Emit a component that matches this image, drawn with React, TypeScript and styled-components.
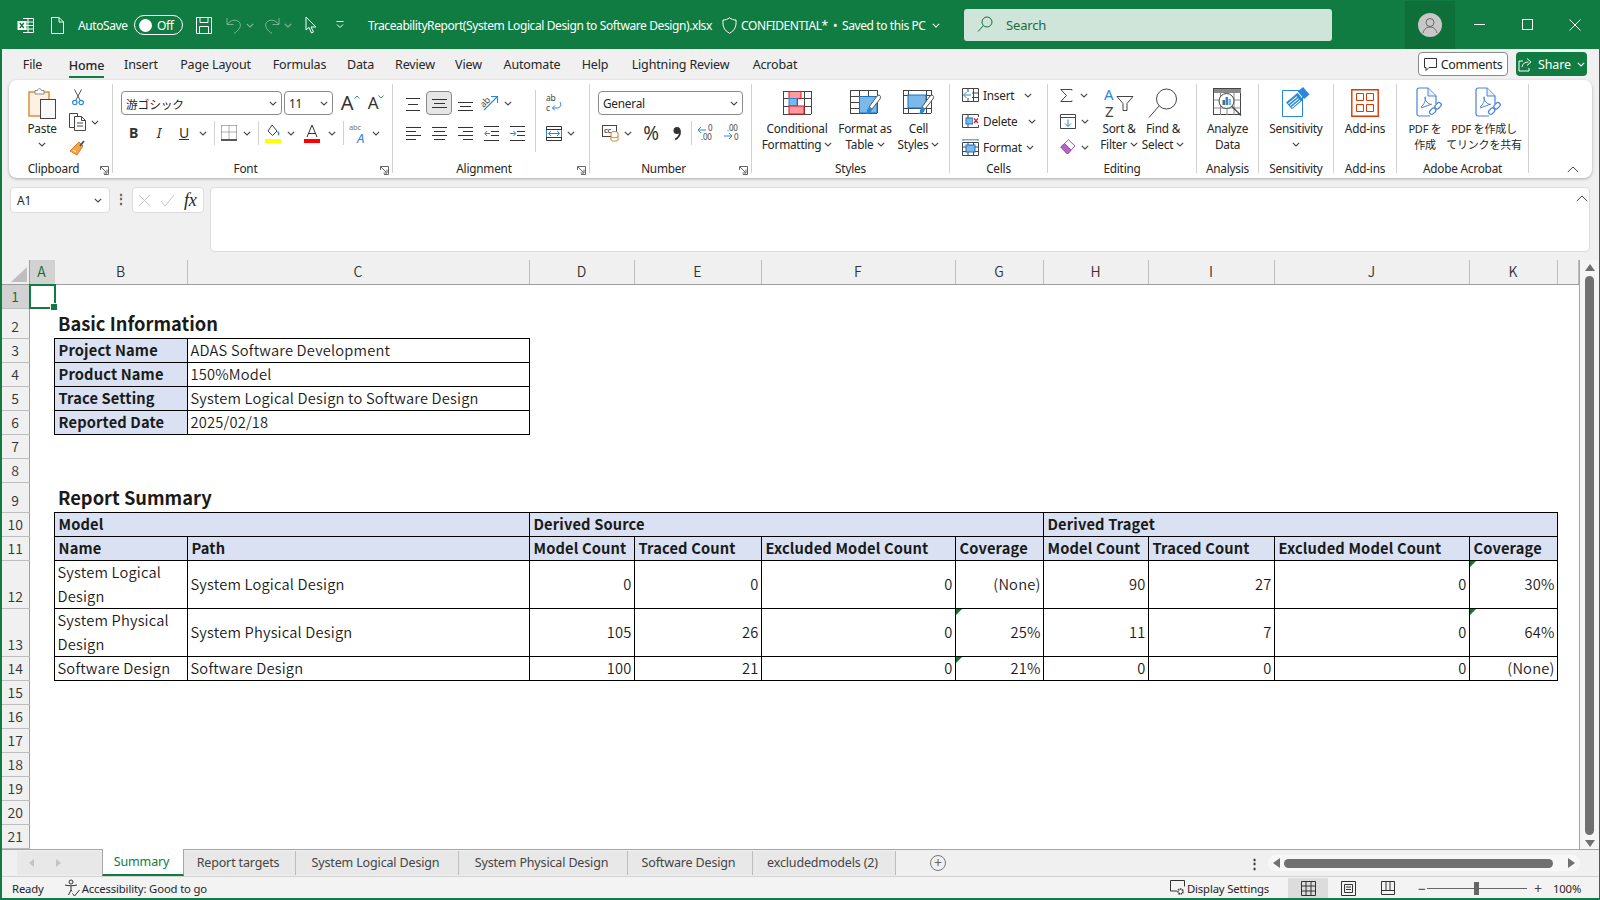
import * as React from 'react';
import styled, {createGlobalStyle} from 'styled-components';

const UI = `"Noto Sans", "Noto Sans CJK JP", sans-serif`;
const SHEET = `"Noto Sans CJK JP", "Noto Sans", sans-serif`;
const GREEN = '#107c41';

const Global = createGlobalStyle`
    html, body { margin: 0; padding: 0; background: #f0f0f0; }
    * { box-sizing: border-box; }
`;

const Window = styled.div`
    width: 1600px;
    height: 900px;
    display: flex;
    flex-direction: column;
    overflow: hidden;
    background: #f0f0f0;
    border-left: 2px solid ${GREEN};
    border-right: 1px solid ${GREEN};
    border-bottom: 2px solid ${GREEN};
    font-family: ${UI};
    font-size: 12px;
    letter-spacing: -0.15px;
    color: #262626;
`;

/* ---------- icons ---------- */

const Svg = styled.svg`
    display: block;
    flex: none;
    overflow: visible;
`;

const I: React.FC<{w: number; h: number; children: React.ReactNode}> = ({w, h, children}) => (
    <Svg width={w} height={h} viewBox={`0 0 ${w} ${h}`} fill='none'>{children}</Svg>
);

const Chev: React.FC<{color?: string}> = ({color = '#444'}) => (
    <I w={8} h={5}><path d='M.8.8 4 4l3.2-3.2' stroke={color} strokeWidth='1.1' /></I>
);

const Launcher = () => (
    <I w={9} h={9}>
        <path d='M.5 4V.5h8v8H4' stroke='#666' />
        <path d='M1 1l5.5 5.5M3.5 7h3.5V3.5' stroke='#666' />
    </I>
);

const ExcelLogo = () => (
    <I w={17} h={17}>
        <path d='M6 1.5h10.5v14H6M11 1.5v14M6 5h10.5M6 8.500h10.500M6 12h10.500' stroke='#fff' />
        <rect x='.5' y='4' width='9' height='9' fill='#fff' />
        <path d='M2.800 6l4 5M6.800 6l-4 5' stroke={GREEN} strokeWidth='1.400' />
    </I>
);

const DocIcon = () => (
    <I w={13} h={17}><path d='M.5.500h7.500l4.500 4.500v11.500H.5zM8 .5V5h4.500' stroke='#fff' /></I>
);

const SaveIcon = () => (
    <I w={16} h={17}><path d='M.5.500h15v16H.5zM4 .5v5h8v-5M3.500 16.500v-7h9v7' stroke='#fff' /></I>
);

const UndoIcon: React.FC<{flip?: boolean}> = ({flip}) => (
    <I w={16} h={17}>
        <g transform={flip ? 'matrix(-1 0 0 1 16 0)' : undefined} opacity='.42'>
            <path d='M1 1v6.500h6.500M1.500 7C5 2.500 11 2 13.500 5.500c2 3 .5 7-5.500 11' stroke='#fff' />
        </g>
    </I>
);

const PointerIcon = () => (
    <I w={12} h={18}><path d='M1 1v13l3-2.500 2.500 5.500 2-1-2.500-5H11z' stroke='#fff' fill='none' /></I>
);

const CustomizeIcon = () => (
    <I w={8} h={8}><path d='M.5.500h7M1 3.500l3 3 3-3' stroke='#fff' /></I>
);

const ShieldIcon = () => (
    <I w={15} h={17}><path d='M7.500.800c2 1.500 4 2.200 6.500 2.200 .5 6-1 10.500-6.500 13.200C2 13.500.5 9 1 3c2.500 0 4.500-.7 6.500-2.200z' stroke='#fff' /></I>
);

const SearchIcon = () => (
    <I w={16} h={17}>
        <circle cx='10' cy='6' r='5' stroke='#1c6b3f' />
        <path d='M6.500 9.500 1 15.500' stroke='#1c6b3f' />
    </I>
);

const CommentIcon = () => (
    <I w={13} h={13}><path d='M.5.500h12v9H5l-3 3v-3H.5z' stroke='#333' /></I>
);

const ShareIcon = () => (
    <I w={14} h={15}>
        <path d='M5 4H1v10h10v-3' stroke='#fff' />
        <path d='M4 10c.5-3.500 3-5 6.500-5M9 1.500 13 5l-4 3.500' stroke='#fff' />
    </I>
);

const PasteIcon = () => (
    <I w={28} h={32}>
        <rect x='1' y='5' width='20' height='24' fill='#fdf2e2' stroke='#d67f1f' strokeWidth='1.300' />
        <path d='M7 5V3.500h2.500C10 1 13 1 13.500 3.500H16V7H7z' fill='#fff' stroke='#8a8a8a' />
        <rect x='12.500' y='12.500' width='15' height='19' fill='#fafafa' stroke='#444' />
    </I>
);

const CutIcon = () => (
    <I w={12} h={17}>
        <path d='M2.500.500 8 11M9.500.500 4 11' stroke='#555' />
        <circle cx='2.800' cy='13.500' r='2.200' stroke='#2b88d8' strokeWidth='1.200' />
        <circle cx='9.200' cy='13.500' r='2.200' stroke='#2b88d8' strokeWidth='1.200' />
    </I>
);

const CopyIcon = () => (
    <I w={18} h={18}>
        <path d='M5 14.500H.5V.500h8V3' stroke='#444' />
        <path d='M5.500 3.500h7l4 4v10h-11zM12.500 3.500v4h4M8 10h6M8 13h6' stroke='#444' />
    </I>
);

const BrushIcon = () => (
    <I w={17} h={18}>
        <path d='M10 3l4 4-6 9-7-4z' fill='#f3a447' stroke='#d67f1f' />
        <path d='M11 7l4-5' stroke='#555' strokeWidth='2' />
        <path d='M4 11l3 2' stroke='#fff' />
    </I>
);

const GrowIcon: React.FC<{down?: boolean}> = ({down}) => (
    <Glyph $size={down ? 17 : 20} $width={down ? 12 : 16}>
        A
        <Caret>
            <I w={6} h={4}><path d={down ? 'M.5.500 3 3 5.500.5' : 'M.5 3.500 3 1l2.500 2.500'} stroke='#2b88d8' /></I>
        </Caret>
    </Glyph>
);

const BordersIcon = () => (
    <I w={16} h={16}>
        <path d='M.5.500h15M.5.500v13M15.500.500v13M.5 7h15M8 .5v13' stroke='#666' strokeDasharray='1 1' />
        <path d='M0 15h16' stroke='#111' strokeWidth='1.400' />
    </I>
);

const FillIcon = () => (
    <I w={16} h={19}>
        <path d='M7 1 12 7l-4.500 4.500L3 7z' stroke='#444' />
        <path d='M12.500 7.500c1.500 1 1.500 3 .5 3.500' stroke='#2b88d8' strokeWidth='1.500' />
        <rect y='15' width='16' height='4' fill='#ff0' />
    </I>
);

const FontColorIcon = () => (
    <I w={16} h={19}>
        <path d='M3 13 8 1l5 12M4.500 9.500h7' stroke='#333' />
        <rect y='15' width='16' height='4' fill='#f00' />
    </I>
);

const AbcIcon = () => (
    <Svg width={19} height={19} viewBox='0 0 19 19'>
        <text x='0' y='6' fontFamily={UI} fontSize='7.500' fill='#777'>abc</text>
        <text x='8' y='19' fontFamily={UI} fontSize='13' fontStyle='italic' fill='#2b88d8'>A</text>
    </Svg>
);

const Lines: React.FC<{ys: number[]; xs: [number, number][]; w?: number; h?: number}> = ({ys, xs, w = 15, h = 15}) => (
    <I w={w} h={h}>
        {ys.map((y, i) => (
            <path key={y} d={`M${xs[i][0]} ${y + .5}H${xs[i][1]}`} stroke='#333' />
        ))}
    </I>
);

const OrientIcon = () => (
    <Svg width={18} height={18} viewBox='0 0 18 18'>
        <text x='0' y='10' fontFamily={UI} fontSize='9' fill='#444' transform='rotate(-45 6 9)'>ab</text>
        <path d='M3 16 16 3M10 2.500h6.500V9' stroke='#2b88d8' fill='none' strokeWidth='1.100' />
    </Svg>
);

const WrapIcon = () => (
    <Svg width={16} height={18} viewBox='0 0 16 18'>
        <text x='0' y='7' fontFamily={UI} fontSize='8.500' fill='#444'>ab</text>
        <text x='0' y='17' fontFamily={UI} fontSize='8.500' fill='#444'>c</text>
        <path d='M14 8c2 3 0 6-3 6H6.500M9 11.500 6.500 14 9 16.500' stroke='#2b88d8' fill='none' />
    </Svg>
);

const IndentIcon: React.FC<{out?: boolean}> = ({out}) => (
    <I w={15} h={15}>
        <path d='M0 .5h15M7 5.500h8M7 9.500h8M0 14.500h15' stroke='#333' />
        <path d={out ? 'M6 7.500H.8M3 5 .8 7.500 3 10' : 'M0 7.500h5.500M3.500 5l2.200 2.500L3.500 10'} stroke='#2b88d8' />
    </I>
);

const MergeIcon = () => (
    <I w={16} h={15}>
        <path d='M.5.500h15v14H.5zM.5 3.500h15M.5 11.500h15' stroke='#333' />
        <rect x='1' y='4' width='14' height='7' fill='#fff' />
        <path d='M.5 4v7M15.500 4v7' stroke='#2b88d8' />
        <path d='M2.500 7.500h11M5 5l-2.500 2.500L5 10M11 5l2.500 2.500L11 10' stroke='#2b88d8' />
    </I>
);

const AccountingIcon = () => (
    <Svg width={17} height={18} viewBox='0 0 17 18'>
        <rect x='.5' y='1.500' width='14' height='11' fill='#fff' stroke='#444' />
        <text x='2' y='9' fontFamily={UI} fontSize='6' fontWeight='700' fill='#444'>CC</text>
        <ellipse cx='12.500' cy='9' rx='3.500' ry='1.500' fill='#fff' stroke='#d67f1f' />
        <path d='M9 9v7c0 1.500 7 1.500 7 0V9M9 12.500c0 1.500 7 1.500 7 0' stroke='#d67f1f' fill='#fff' />
    </Svg>
);

const CommaIcon = () => (
    <I w={10} h={15}>
        <circle cx='5' cy='4.500' r='3.500' fill='#333' />
        <path d='M8 4.500c.5 4-2 7.500-5 9' stroke='#333' strokeWidth='1.600' />
    </I>
);

const DecimalIcon: React.FC<{inc?: boolean}> = ({inc}) => (
    <Svg width={18} height={18} viewBox='0 0 18 18'>
        <text x={inc ? 11 : 4} y='7' fontFamily={UI} fontSize='8' fill='#444'>{inc ? '0' : '.00'}</text>
        <text x={inc ? 4 : 11} y='16' fontFamily={UI} fontSize='8' fill='#444'>{inc ? '.00' : '0'}</text>
        <path d={inc ? 'M1 6h8M4 3 1 6l3 3' : 'M1 12h8M6 9l3 3-3 3'} stroke='#2b88d8' fill='none' />
    </Svg>
);

const Grid: React.FC<{x: number[]; y: number[]}> = ({x, y}) => (
    <g stroke='#444'>
        {x.map(v => <path key={`x${v}`} d={`M${v + .5} ${y[0]}V${y[y.length - 1]}`} />)}
        {y.map(v => <path key={`y${v}`} d={`M${x[0]} ${v + .5}H${x[x.length - 1]}`} />)}
    </g>
);

const CondFormatIcon = () => (
    <I w={29} h={24}>
        <Grid x={[0, 7, 14, 21, 28]} y={[0, 7, 15, 23]} />
        <rect x='6' y='.5' width='12' height='7' fill='#ff9a9e' stroke='#e81123' />
        <rect x='6' y='7.500' width='8' height='7.500' fill='#7db8ea' stroke='#2b88d8' />
        <rect x='6' y='15' width='15' height='8' fill='#ff9a9e' stroke='#e81123' />
    </I>
);

const BrushOver = () => (
    <g>
        <path d='M29 5c2 1 2 2 1 4l-8 10-3-2 8-11z' fill='#fff' stroke='#555' />
        <path d='M19 17l3 2c0 3-3 5-7 5 2-1 2-2 2-4z' fill='#2b88d8' />
    </g>
);

const TableStyleIcon = () => (
    <I w={31} h={25}>
        <Grid x={[0, 9, 18, 27]} y={[0, 6, 12, 18, 23]} />
        <rect x='9' y='6' width='18' height='17' fill='#7db8ea' />
        <path d='M9.500 6.500h17.500v16.500H9.500z' stroke='#1673c5' />
        <BrushOver />
    </I>
);

const CellStyleIcon = () => (
    <I w={31} h={25}>
        <Grid x={[0, 5, 23, 28]} y={[0, 5, 18, 23]} />
        <rect x='5' y='5' width='18' height='13' fill='#7db8ea' stroke='#1673c5' />
        <BrushOver />
    </I>
);

const InsertCellIcon = () => (
    <I w={17} h={14}>
        <path d='M.5.500h16v13H.5zM.5 5h16M.5 9.500h16M6 .5v13M11.500 .5v13' stroke='#444' />
        <rect x='1' y='4' width='9' height='6' fill='#fff' />
        <path d='M9 7H1.500M4.500 4 1.500 7l3 3' stroke='#2b88d8' />
    </I>
);

const DeleteCellIcon = () => (
    <I w={17} h={14}>
        <path d='M.5.500h16v13H.5zM6 .5v13' stroke='#444' />
        <rect x='4' y='4' width='7' height='6' fill='#7db8ea' stroke='#1673c5' />
        <rect x='11' y='3' width='6' height='8' fill='#fff' />
        <path d='M12 4.500l4 4.500M16 4.500l-4 4.500' stroke='#e81123' strokeWidth='1.200' />
    </I>
);

const FormatCellIcon = () => (
    <I w={17} h={17}>
        <path d='M.5 3.500h16v13H.5zM.5 8h16M.5 12.500h16M6 3.500v13M11.500 3.500v13' stroke='#444' />
        <rect x='4' y='6' width='9' height='7' fill='#7db8ea' stroke='#1673c5' />
        <path d='M1 .8h15M1 0v2M16 0v2' stroke='#2b88d8' />
    </I>
);

const SigmaIcon = () => (
    <I w={12} h={13}><path d='M12 1.500V.5H.8L6.500 6.500.8 12.500H12v-1' stroke='#444' /></I>
);

const FillDownIcon = () => (
    <I w={16} h={15}>
        <path d='M.5.500h15v14H.5zM.5 3.500h15' stroke='#444' />
        <path d='M8 5.500v7M5 9.500l3 3 3-3' stroke='#2b88d8' />
    </I>
);

const EraserIcon = () => (
    <I w={16} h={16}>
        <path d='M.8 8 8.500.8 15 7l-7.500 8z' fill='#fff' stroke='#a349b4' />
        <path d='M.8 8 4.500 4.500l6.500 6.500-3.500 4z' fill='#b565c6' stroke='#a349b4' />
    </I>
);

const SortFilterIcon = () => (
    <Svg width={30} height={29} viewBox='0 0 30 29'>
        <text x='0' y='12' fontFamily={UI} fontSize='15' fill='#2b88d8'>A</text>
        <text x='1' y='29' fontFamily={UI} fontSize='15' fill='#444'>Z</text>
        <path d='M13 8.500h16l-6 7v7l-4 0v-7z' fill='#fff' stroke='#444' />
    </Svg>
);

const FindIcon = () => (
    <I w={30} h={30}>
        <circle cx='18.500' cy='11' r='10' fill='#fff' stroke='#444' />
        <path d='M11 18 1 29.500' stroke='#444' />
    </I>
);

const AnalyzeIcon = () => (
    <I w={29} h={29}>
        <rect x='.5' y='.5' width='27' height='26' stroke='#444' />
        <rect x='1' y='1' width='27' height='4' fill='#8a8a8a' />
        <path d='M.5 12h27M.5 20h27M7.500 5v22M14 5v22M21 5v22' stroke='#8a8a8a' />
        <circle cx='13.500' cy='13' r='7.500' fill='#fff' stroke='#444' />
        <path d='M19 18.500l9 9' stroke='#444' strokeWidth='1.200' />
        <rect x='9.500' y='12' width='2.500' height='5' fill='#666' />
        <rect x='12.500' y='9' width='2.500' height='8' fill='#2b88d8' />
        <rect x='15.500' y='11' width='2.500' height='6' fill='#7db8ea' />
    </I>
);

const SensitivityIcon = () => (
    <I w={28} h={31}>
        <path d='M.5 3.500h20v26H.5z' stroke='#2b88d8' fill='#fff' />
        <g transform='rotate(-40 12 14)'>
            <rect x='5' y='10' width='15' height='9' fill='#2b88d8' />
            <path d='M6 12.500h11M6 15h11M6 17.500h11' stroke='#fff' />
            <rect x='21' y='9' width='7' height='10' fill='#2b88d8' />
        </g>
    </I>
);

const AddInsIcon = () => (
    <I w={28} h={28}>
        <path d='M.8.800h26.400v26.400H.8z' stroke='#d83b01' strokeWidth='1.400' />
        <path d='M5.500 4.500h7v7h-7zM15.500 4.500h7v7h-7zM5.500 15.500h7v7h-7zM15.500 15.500h7v7h-7z' stroke='#d83b01' />
    </I>
);

const PdfIcon = () => (
    <I w={26} h={31}>
        <path d='M14 29H3a2 2 0 0 1-2-2V3a2 2 0 0 1 2-2h9l8 8v8' stroke='#4a82d8' strokeWidth='1.200' />
        <path d='M12 1v8h8' stroke='#4a82d8' fill='#e9f0fb' />
        <path d='M5 20c3-2 5-7 4.500-9.500C9.300 9 8.500 10 9 12c.5 2 3 5 6 5.500' stroke='#4a82d8' />
        <path d='M5 21l11-4' stroke='#4a82d8' />
        <rect x='13' y='22' width='7' height='4.500' rx='2.200' transform='rotate(-45 16.500 24)' fill='#fff' stroke='#4a82d8' strokeWidth='1.200' />
        <rect x='18.500' y='16.500' width='7' height='4.500' rx='2.200' transform='rotate(-45 22 18.700)' fill='#fff' stroke='#4a82d8' strokeWidth='1.200' />
    </I>
);

const DisplayIcon = () => (
    <I w={16} h={16}>
        <path d='M7 11H.5V.5h14v6' stroke='#333' />
        <circle cx='10.500' cy='11.500' r='2.500' stroke='#333' strokeWidth='1.600' strokeDasharray='1.500 .7' />
    </I>
);

const AccessibilityIcon = () => (
    <I w={17} h={18}>
        <circle cx='7' cy='3' r='2' stroke='#333' />
        <path d='M1 6c4 1 8 1 12 0M7 7v4M4.500 16 7 11l1 1.500' stroke='#333' />
        <path d='M8.500 14.500l2 2.500 5-6' stroke='#333' />
    </I>
);

const NormalViewIcon = () => (
    <I w={15} h={15}><path d='M.5.500h14v14H.5zM.5 5h14M.5 10h14M5 .5v14M10 .5v14' stroke='#333' /></I>
);

const PageViewIcon = () => (
    <I w={15} h={15}><path d='M.5.500h14v14H.5zM3.500 3.500h8v8h-8zM5 6h5M5 8.500h5' stroke='#333' /></I>
);

const BreakViewIcon = () => (
    <I w={14} h={15}><path d='M.5.500h13v13H.5zM.5 9.500h13M5 .5v9M9 .5v9' stroke='#333' /></I>
);

/* ---------- title bar ---------- */

const TitleBar = styled.header`
    flex: none;
    display: flex;
    align-items: center;
    height: 49px;
    background: ${GREEN};
    color: #fff;
    letter-spacing: -0.4px;
`;

const TitleLeft = styled.div`
    flex: none;
    width: 962px;
    display: flex;
    align-items: center;
    padding: 1px 0 0 15px;
    white-space: nowrap;
`;

const TitleItem = styled.div<{$ml?: number; $w?: number}>`
    flex: none;
    display: flex;
    align-items: center;
    margin-left: ${p => p.$ml || 0}px;
    ${p => p.$w ? `width: ${p.$w}px;` : ''}
`;

const Toggle = styled.div`
    flex: none;
    display: flex;
    align-items: center;
    gap: 5px;
    width: 49px;
    height: 20px;
    margin-left: 8px;
    padding-left: 4px;
    border: 1px solid #fff;
    border-radius: 10px;
    &::before {
        content: '';
        width: 13px;
        height: 13px;
        border-radius: 50%;
        background: #fff;
    }
`;

const SearchBox = styled.div`
    flex: none;
    display: flex;
    align-items: center;
    gap: 13px;
    width: 368px;
    height: 32px;
    padding-left: 13px;
    border-radius: 3px;
    background: #cfe5d9;
    color: #1c6b3f;
    font-size: 13px;
    letter-spacing: -0.15px;
`;

const Avatar = styled.div`
    flex: none;
    display: flex;
    align-items: center;
    justify-content: center;
    width: 50px;
    height: 48px;
    margin-left: 73px;
    background: #0e7038;
`;

const WinButton = styled.div`
    flex: none;
    display: flex;
    align-items: center;
    justify-content: center;
    width: 48px;
    height: 48px;
`;

/* ---------- menu row ---------- */

const MenuRow = styled.nav`
    flex: none;
    display: flex;
    align-items: center;
    height: 31px;
    padding: 0 0 1px 8px;
    font-size: 12.500px;
`;

const MenuTab = styled.div<{$w: number}>`
    flex: none;
    width: ${p => p.$w}px;
    text-align: center;
    white-space: nowrap;
`;

const ActiveLabel = styled.span`
    display: inline-block;
    font-weight: 500;
    line-height: 21px;
    border-bottom: 2px solid ${GREEN};
    margin-bottom: -4px;
`;

const CommentsButton = styled.div`
    flex: none;
    display: flex;
    align-items: center;
    justify-content: center;
    gap: 4px;
    width: 90px;
    height: 24px;
    margin-left: auto;
    background: #fff;
    border: 1px solid #8a8a8a;
    border-radius: 4px;
    letter-spacing: -0.3px;
`;

const ShareButton = styled.div`
    flex: none;
    display: flex;
    align-items: center;
    justify-content: center;
    gap: 6px;
    width: 71px;
    height: 24px;
    margin: 0 12px 0 8px;
    background: ${GREEN};
    color: #fff;
    border-radius: 4px;
`;

/* ---------- ribbon ---------- */

const Ribbon = styled.section`
    flex: none;
    display: flex;
    height: 98px;
    margin: 0 7px 9px;
    padding: 4px 0 5px;
    background: #fff;
    border-radius: 8px;
    box-shadow: 0 1px 3px rgba(0, 0, 0, .3);
    font-size: 11.800px;
    letter-spacing: -0.22px;
`;

const Group = styled.div<{$w: number}>`
    position: relative;
    flex: none;
    width: ${p => p.$w}px;
    border-right: 1px solid #d2d2d2;
`;

const GroupBody = styled.div`
    display: flex;
    height: 76px;
`;

const GroupLabel = styled.div<{$launcher?: boolean}>`
    height: 13px;
    line-height: 16px;
    text-align: center;
    white-space: nowrap;
    padding-right: ${p => p.$launcher ? 14 : 0}px;
`;

const LauncherSpot = styled.div`
    position: absolute;
    right: 3px;
    bottom: -2px;
`;

const CollapseRibbon = styled.div`
    align-self: flex-end;
    margin: 0 13px 0 auto;
`;

const BigButton = styled.div<{$w: number; $ml?: number}>`
    flex: none;
    display: flex;
    flex-direction: column;
    align-items: center;
    width: ${p => p.$w}px;
    margin-left: ${p => p.$ml || 0}px;
    padding-top: 1px;
`;

const BigIcon = styled.div<{$ml?: number}>`
    flex: none;
    display: flex;
    align-items: center;
    height: 35px;
    margin-left: ${p => p.$ml || 0}px;
`;

const BigLine = styled.div<{$small?: boolean}>`
    display: flex;
    align-items: center;
    gap: 3px;
    height: 16px;
    white-space: nowrap;
    ${p => p.$small ? 'font-size: 11px;' : ''}
`;

const SmallStack = styled.div<{$w: number; $pl?: number}>`
    flex: none;
    width: ${p => p.$w}px;
    margin-top: -2px;
    padding-left: ${p => p.$pl || 0}px;
`;

const SmallRow = styled.div<{$gap?: number}>`
    display: flex;
    align-items: center;
    gap: ${p => p.$gap || 0}px;
    height: 26px;
    white-space: nowrap;
`;

const ChevGap = styled.div<{$ml: number}>`
    margin-left: ${p => p.$ml}px;
`;

const ClipStack = styled.div`
    flex: none;
    display: flex;
    flex-direction: column;
    width: 44px;
    padding-top: 2px;
`;

const ClipItem = styled.div<{$h: number; $pl?: number}>`
    display: flex;
    align-items: center;
    gap: 4px;
    height: ${p => p.$h}px;
    padding-left: ${p => p.$pl || 0}px;
`;

const ToolColumn = styled.div<{$pl: number; $w?: number}>`
    flex: none;
    display: flex;
    flex-direction: column;
    gap: 6px;
    padding: 7px 0 0 ${p => p.$pl}px;
    ${p => p.$w ? `width: ${p.$w}px;` : ''}
`;

const ToolRow = styled.div`
    display: flex;
    align-items: center;
    height: 24px;
`;

const Slot = styled.div<{$w: number}>`
    flex: none;
    display: flex;
    align-items: center;
    justify-content: center;
    width: ${p => p.$w}px;
    height: 24px;
`;

const ActiveSlot = styled(Slot)`
    background: #e6e6e6;
    border: 1px solid #8a8a8a;
    border-radius: 4px;
`;

const SlotLine = styled.div<{$h?: number}>`
    width: 1px;
    height: ${p => p.$h || 24}px;
    background: #d2d2d2;
`;

const VerticalRule = styled.div`
    flex: none;
    width: 1px;
    height: 62px;
    margin-top: 6px;
    background: #d2d2d2;
`;

const Combo = styled.div<{$w: number; $ml?: number}>`
    flex: none;
    display: flex;
    align-items: center;
    justify-content: space-between;
    width: ${p => p.$w}px;
    height: 24px;
    margin-left: ${p => p.$ml || 0}px;
    padding: 0 4px;
    background: #fff;
    border: 1px solid #8a8a8a;
    border-radius: 4px;
    white-space: nowrap;
`;

const Glyph = styled.span<{$size: number; $width: number; $weight?: number; $italic?: boolean; $under?: boolean}>`
    position: relative;
    display: inline-block;
    flex: none;
    width: ${p => p.$width}px;
    text-align: center;
    font-size: ${p => p.$size}px;
    font-weight: ${p => p.$weight || 400};
    font-style: ${p => p.$italic ? 'italic' : 'normal'};
    text-decoration: ${p => p.$under ? 'underline' : 'none'};
    line-height: 22px;
    color: #333;
`;

const Caret = styled.span`
    position: absolute;
    right: -5px;
    top: 3px;
`;

/* ---------- formula bar ---------- */

const FormulaBar = styled.section`
    flex: none;
    display: flex;
    align-items: flex-start;
    height: 65px;
    margin: 0 9px 8px 8px;
`;

const NameBox = styled.div`
    flex: none;
    display: flex;
    align-items: center;
    justify-content: space-between;
    width: 100px;
    height: 26px;
    padding: 0 7px 0 6px;
    background: #fff;
    border: 1px solid #dcdcdc;
    border-radius: 4px;
`;

const Dots = styled.div`
    flex: none;
    width: 22px;
    text-align: center;
    line-height: 24px;
    font-weight: 700;
    color: #555;
`;

const FxBox = styled.div`
    flex: none;
    display: flex;
    align-items: center;
    gap: 9px;
    width: 72px;
    height: 26px;
    padding-left: 5px;
    background: #fff;
    border: 1px solid #dcdcdc;
    border-radius: 4px;
`;

const FxText = styled.span`
    font-family: "Liberation Serif", serif;
    font-style: italic;
    font-size: 18px;
`;

const FormulaInput = styled.div`
    position: relative;
    flex: 1;
    height: 65px;
    margin-left: 6px;
    background: #fff;
    border: 1px solid #dcdcdc;
    border-radius: 4px;
`;

const FormulaCollapse = styled.div`
    position: absolute;
    top: 7px;
    right: 1px;
`;

/* ---------- sheet ---------- */

const SheetArea = styled.main`
    flex: 1;
    min-height: 0;
    display: flex;
    background: #fff;
`;

const SheetTable = styled.table`
    flex: none;
    width: 1576px;
    table-layout: fixed;
    border-collapse: collapse;
    align-self: flex-start;
    font-family: ${SHEET};
    font-size: 14.67px;
    font-weight: 350;
    letter-spacing: 0.12px;
    color: #1a1a1a;
`;

const ColHead = styled.th<{$active?: boolean}>`
    height: 24px;
    padding: 0 0 2px;
    font-size: 14px;
    font-weight: 350;
    background: ${p => p.$active ? '#d2d2d2' : '#f0f0f0'};
    color: ${p => p.$active ? '#0c6b36' : '#333'};
    border-right: 1px solid ${p => p.$active ? '#d2d2d2' : '#bdbdbd'};
    border-bottom: 1px solid #9e9e9e;
`;

const CornerHead = styled(ColHead)`
    position: relative;
    border-right: 1px solid #9e9e9e;
    &::after {
        content: '';
        position: absolute;
        right: 2px;
        bottom: 2px;
        border-style: solid;
        border-width: 0 0 15px 16px;
        border-color: transparent transparent #bfbfbf transparent;
    }
`;

const RowHead = styled.th<{$active?: boolean; $h: number}>`
    height: ${p => p.$h}px;
    padding: 0 0 3px;
    font-size: 14px;
    line-height: 18px;
    font-weight: 350;
    vertical-align: bottom;
    background: ${p => p.$active ? '#d2d2d2' : '#f0f0f0'};
    color: ${p => p.$active ? '#0c6b36' : '#333'};
    border-right: 1px solid #9e9e9e;
    border-bottom: 1px solid #bdbdbd;
`;

const Cell = styled.td<{$box?: boolean; $fill?: boolean; $bold?: boolean; $right?: boolean; $flag?: boolean}>`
    position: relative;
    padding: 0 2px 0 ${p => p.$bold ? 4 : 3}px;
    line-height: 20px;
    white-space: nowrap;
    vertical-align: middle;
    text-align: ${p => p.$right ? 'right' : 'left'};
    font-weight: ${p => p.$bold ? 700 : 350};
    letter-spacing: ${p => p.$bold ? 0.15 : 0.2}px;
    background: ${p => p.$fill ? '#d9e1f2' : 'transparent'};
    border: ${p => p.$box ? '1px solid #000' : 'none'};
    ${p => p.$flag ? `
        &::before {
            content: '';
            position: absolute;
            top: 0;
            left: 0;
            border-style: solid;
            border-width: 6px 6px 0 0;
            border-color: #0a7a24 transparent transparent transparent;
        }
    ` : ''}
`;

const WrapText = styled.div`
    white-space: normal;
    line-height: 24px;
    margin: -1px 0;
`;

const HeadingCell = styled.td`
    padding: 0 0 2px 4px;
    font-size: 18.300px;
    font-weight: 700;
    letter-spacing: 0;
    line-height: 26px;
    vertical-align: bottom;
    white-space: nowrap;
`;

const SelectedCell = styled.td`
    position: relative;
    &::after {
        content: '';
        position: absolute;
        inset: -1px -2px -1px -1px;
        border: 2px solid ${GREEN};
    }
    &::before {
        content: '';
        position: absolute;
        right: -4px;
        bottom: -3px;
        width: 6px;
        height: 6px;
        background: ${GREEN};
        border: 1px solid #fff;
        z-index: 1;
    }
`;

const VScroll = styled.div`
    flex: none;
    display: flex;
    flex-direction: column;
    align-items: center;
    width: 21px;
    padding: 4px 0 2px;
    background: #f5f5f5;
    border-left: 1px solid #a6a6a6;
`;

const VThumb = styled.div`
    flex: 1;
    width: 9px;
    margin: 5px 0;
    background: #707070;
    border-radius: 5px;
`;

const Triangle = styled.div<{$dir: 'up' | 'down' | 'left' | 'right'}>`
    flex: none;
    width: 0;
    height: 0;
    border-style: solid;
    ${p => p.$dir === 'up' && 'border-width: 0 5px 7px 5px; border-color: transparent transparent #707070 transparent;'}
    ${p => p.$dir === 'down' && 'border-width: 7px 5px 0 5px; border-color: #707070 transparent transparent transparent;'}
    ${p => p.$dir === 'left' && 'border-width: 5px 7px 5px 0; border-color: transparent #707070 transparent transparent;'}
    ${p => p.$dir === 'right' && 'border-width: 5px 0 5px 7px; border-color: transparent transparent transparent #707070;'}
`;

/* ---------- sheet tabs ---------- */

const TabBar = styled.div`
    flex: none;
    display: flex;
    align-items: center;
    height: 28px;
    border-top: 1px solid #a6a6a6;
    border-bottom: 1px solid #d2d2d2;
    font-size: 12.500px;
`;

const TabNav = styled.div`
    flex: none;
    display: flex;
    align-items: center;
    gap: 22px;
    width: 85px;
    height: 24px;
    margin-left: 15px;
    padding-left: 12px;
    background: #e8e8e8;
`;

const NavArrow = styled.div<{$right?: boolean}>`
    width: 0;
    height: 0;
    border-style: solid;
    border-width: ${p => p.$right ? '4px 0 4px 5px' : '4px 5px 4px 0'};
    border-color: transparent;
    ${p => p.$right ? 'border-left-color: #c4c4c4;' : 'border-right-color: #c4c4c4;'}
`;

const SheetTab = styled.div<{$w: number; $active?: boolean}>`
    flex: none;
    display: flex;
    align-items: center;
    justify-content: center;
    width: ${p => p.$w}px;
    height: ${p => p.$active ? 27 : 24}px;
    padding: 0 3px 1px 0;
    white-space: nowrap;
    background: ${p => p.$active ? '#fff' : '#e8e8e8'};
    color: ${p => p.$active ? GREEN : '#444'};
    border-right: 1px solid ${p => p.$active ? '#a6a6a6' : '#bdbdbd'};
    ${p => p.$active ? `
        align-self: flex-start;
        margin-top: -1px;
        border-left: 1px solid #a6a6a6;
        border-bottom: 2px solid ${GREEN};
    ` : ''}
`;

const AddSheet = styled.div`
    flex: none;
    display: flex;
    align-items: center;
    justify-content: center;
    width: 16px;
    height: 16px;
    margin-left: 34px;
    border: 1px solid #777;
    border-radius: 50%;
    color: #666;
    font-size: 14px;
    line-height: 14px;
`;

const TabDots = styled.div`
    flex: none;
    margin-left: auto;
    width: 14px;
    text-align: center;
    font-weight: 700;
    color: #333;
`;

const HScroll = styled.div`
    flex: none;
    display: flex;
    align-items: center;
    gap: 4px;
    width: 312px;
    height: 16px;
    margin: 0 19px 0 7px;
    padding: 0 5px;
    background: #f7f7f7;
    border-radius: 8px;
`;

const HThumb = styled.div`
    flex: 1;
    height: 9px;
    margin-right: 11px;
    background: #707070;
    border-radius: 5px;
`;

/* ---------- status bar ---------- */

const StatusBar = styled.footer`
    flex: none;
    display: flex;
    align-items: center;
    height: 21px;
    padding: 1px 19px 0 10px;
    background: #f3f3f3;
    font-size: 11.300px;
`;

const StatusItem = styled.div<{$ml?: number; $w?: number; $auto?: boolean}>`
    flex: none;
    display: flex;
    align-items: center;
    gap: 1px;
    margin-left: ${p => p.$auto ? 'auto' : `${p.$ml || 0}px`};
    ${p => p.$w ? `width: ${p.$w}px;` : ''}
    white-space: nowrap;
`;

const ViewButton = styled.div<{$active?: boolean; $ml?: number}>`
    flex: none;
    display: flex;
    align-items: center;
    justify-content: center;
    width: 40px;
    height: 20px;
    margin-left: ${p => p.$ml || 0}px;
    background: ${p => p.$active ? '#dcdcdc' : 'transparent'};
`;

const ZoomSign = styled.div<{$ml: number}>`
    flex: none;
    width: 8px;
    margin-left: ${p => p.$ml}px;
    text-align: center;
    font-size: 14px;
    color: #444;
`;

const ZoomTrack = styled.div`
    position: relative;
    flex: none;
    width: 100px;
    height: 1px;
    margin-left: 1px;
    background: #666;
    &::after {
        content: '';
        position: absolute;
        left: 47px;
        top: -6px;
        width: 5px;
        height: 13px;
        background: #666;
    }
`;

/* ---------- page data ---------- */

const menuTabs: [string, number][] = [
    ['File', 45], ['Home', 63], ['Insert', 46], ['Page Layout', 103], ['Formulas', 65], ['Data', 57],
    ['Review', 52], ['View', 55], ['Automate', 72], ['Help', 54], ['Lightning Review', 117], ['Acrobat', 72],
];

const sheetTabs: [string, number][] = [
    ['Summary', 82], ['Report targets', 112], ['System Logical Design', 163],
    ['System Physical Design', 169], ['Software Design', 125], ['excludedmodels (2)', 143],
];

const columns: [string, number][] = [
    ['A', 25], ['B', 133], ['C', 342], ['D', 105], ['E', 127], ['F', 194],
    ['G', 88], ['H', 105], ['I', 126], ['J', 195], ['K', 88],
];

const basicInfo = [
    ['Project Name', 'ADAS Software Development'],
    ['Product Name', '150%Model'],
    ['Trace Setting', 'System Logical Design to Software Design'],
    ['Reported Date', '2025/02/18'],
];

const countHeads = ['Model Count', 'Traced Count', 'Excluded Model Count', 'Coverage'];

interface ISummaryRow {
    h: number;
    name: string;
    wrap?: boolean;
    source: (string | number)[];
    target: (string | number)[];
}

const summary: ISummaryRow[] = [
    {h: 48, name: 'System Logical Design', wrap: true, source: [0, 0, 0, '(None)'], target: [90, 27, 0, '30%']},
    {h: 48, name: 'System Physical Design', wrap: true, source: [105, 26, 0, '25%'], target: [11, 7, 0, '64%']},
    {h: 24, name: 'Software Design', source: [100, 21, 0, '21%'], target: [0, 0, 0, '(None)']},
];

const countCells = (values: (string | number)[], key: string) => values.map((v, i) => (
    <Cell key={key + i} $box $right $flag={i === 3 && String(v).endsWith('%')}>{v}</Cell>
));

const SheetRows = () => {
    const row = (n: number, h: number, cells: React.ReactNode) => (
        <tr key={n}>
            <RowHead $h={h} $active={n === 1}>{n}</RowHead>
            {cells}
        </tr>
    );
    const empty = (n: number) => row(n, 24, <td colSpan={12} />);

    return (
        <tbody>
            {row(1, 24, <><SelectedCell /><td colSpan={11} /></>)}
            {row(2, 30, <><td /><HeadingCell colSpan={2}>Basic Information</HeadingCell><td colSpan={9} /></>)}
            {basicInfo.map(([label, value], i) => row(3 + i, 24, (
                <>
                    <td />
                    <Cell $box $fill $bold>{label}</Cell>
                    <Cell $box>{value}</Cell>
                    <td colSpan={9} />
                </>
            )))}
            {empty(7)}
            {empty(8)}
            {row(9, 30, <><td /><HeadingCell colSpan={2}>Report Summary</HeadingCell><td colSpan={9} /></>)}
            {row(10, 24, (
                <>
                    <td />
                    <Cell $box $fill $bold colSpan={2}>Model</Cell>
                    <Cell $box $fill $bold colSpan={4}>Derived Source</Cell>
                    <Cell $box $fill $bold colSpan={4}>Derived Traget</Cell>
                    <td />
                </>
            ))}
            {row(11, 24, (
                <>
                    <td />
                    <Cell $box $fill $bold>Name</Cell>
                    <Cell $box $fill $bold>Path</Cell>
                    {[...countHeads, ...countHeads].map((head, i) => (
                        <Cell key={i} $box $fill $bold>{head}</Cell>
                    ))}
                    <td />
                </>
            ))}
            {summary.map((s, i) => row(12 + i, s.h, (
                <>
                    <td />
                    <Cell $box>{s.wrap ? <WrapText>{s.name}</WrapText> : s.name}</Cell>
                    <Cell $box>{s.name}</Cell>
                    {countCells(s.source, 'src')}
                    {countCells(s.target, 'dst')}
                    <td />
                </>
            )))}
            {[15, 16, 17, 18, 19, 20, 21].map(empty)}
        </tbody>
    );
};

const Chevron = () => <Chev />;

export default function App() {
    return (
        <Window>
            <Global />

            <TitleBar>
                <TitleLeft>
                    <ExcelLogo />
                    <TitleItem $ml={17}><DocIcon /></TitleItem>
                    <TitleItem $ml={14} $w={48}>AutoSave</TitleItem>
                    <Toggle>Off</Toggle>
                    <TitleItem $ml={13}><SaveIcon /></TitleItem>
                    <TitleItem $ml={14}><UndoIcon /></TitleItem>
                    <TitleItem $ml={4}><Chev color='#7fb79a' /></TitleItem>
                    <TitleItem $ml={10}><UndoIcon flip /></TitleItem>
                    <TitleItem $ml={4}><Chev color='#7fb79a' /></TitleItem>
                    <TitleItem $ml={13}><PointerIcon /></TitleItem>
                    <TitleItem $ml={19}><CustomizeIcon /></TitleItem>
                    <TitleItem $ml={24} $w={344}>TraceabilityReport(System Logical Design to Software Design).xlsx</TitleItem>
                    <TitleItem $ml={10}><ShieldIcon /></TitleItem>
                    <TitleItem $ml={4} $w={85}>CONFIDENTIAL*</TitleItem>
                    <TitleItem $ml={7} $w={9}>•</TitleItem>
                    <TitleItem $w={85}>Saved to this PC</TitleItem>
                    <TitleItem $ml={5}><Chev color='#fff' /></TitleItem>
                </TitleLeft>
                <SearchBox><SearchIcon />Search</SearchBox>
                <Avatar>
                    <I w={24} h={24}>
                        <circle cx='12' cy='12' r='12' fill='#c8c8c8' />
                        <circle cx='12' cy='9.500' r='4' stroke='#666' />
                        <path d='M5 20c1-4 4-6 7-6s6 2 7 6' stroke='#666' />
                    </I>
                </Avatar>
                <WinButton><I w={11} h={11}><path d='M0 5.500h11' stroke='#fff' /></I></WinButton>
                <WinButton><I w={11} h={11}><rect x='.5' y='.5' width='10' height='10' stroke='#fff' /></I></WinButton>
                <WinButton><I w={12} h={12}><path d='M.5.500l11 11M11.500 .5l-11 11' stroke='#fff' /></I></WinButton>
            </TitleBar>

            <MenuRow>
                {menuTabs.map(([label, w]) => (
                    <MenuTab key={label} $w={w}>
                        {label === 'Home' ? <ActiveLabel>{label}</ActiveLabel> : label}
                    </MenuTab>
                ))}
                <CommentsButton><CommentIcon />Comments</CommentsButton>
                <ShareButton><ShareIcon />Share<Chev color='#fff' /></ShareButton>
            </MenuRow>

            <Ribbon>
                <Group $w={104}>
                    <GroupBody>
                        <BigButton $w={54} $ml={6}>
                            <BigIcon><PasteIcon /></BigIcon>
                            <BigLine>Paste</BigLine>
                            <BigLine><Chevron /></BigLine>
                        </BigButton>
                        <ClipStack>
                            <ClipItem $h={22} $pl={3}><CutIcon /></ClipItem>
                            <ClipItem $h={28}><CopyIcon /><Chevron /></ClipItem>
                            <ClipItem $h={24}><BrushIcon /></ClipItem>
                        </ClipStack>
                    </GroupBody>
                    <GroupLabel $launcher>Clipboard</GroupLabel>
                    <LauncherSpot><Launcher /></LauncherSpot>
                </Group>

                <Group $w={280}>
                    <GroupBody>
                        <ToolColumn $pl={8}>
                            <ToolRow>
                                <Combo $w={161}>游ゴシック<Chevron /></Combo>
                                <Combo $w={49} $ml={2}>11<Chevron /></Combo>
                                <Slot $w={28}><GrowIcon /></Slot>
                                <Slot $w={24}><GrowIcon down /></Slot>
                            </ToolRow>
                            <ToolRow>
                                <Slot $w={25}><Glyph $size={14} $width={12} $weight={700}>B</Glyph></Slot>
                                <Slot $w={26}><Glyph $size={14} $width={10} $italic>I</Glyph></Slot>
                                <Slot $w={24}><Glyph $size={14} $width={12} $under>U</Glyph></Slot>
                                <Slot $w={14}><Chevron /></Slot>
                                <Slot $w={8}><SlotLine /></Slot>
                                <Slot $w={22}><BordersIcon /></Slot>
                                <Slot $w={14}><Chevron /></Slot>
                                <Slot $w={8}><SlotLine /></Slot>
                                <Slot $w={22}><FillIcon /></Slot>
                                <Slot $w={14}><Chevron /></Slot>
                                <Slot $w={28}><FontColorIcon /></Slot>
                                <Slot $w={12}><Chevron /></Slot>
                                <Slot $w={10}><SlotLine /></Slot>
                                <Slot $w={21}><AbcIcon /></Slot>
                                <Slot $w={14}><Chevron /></Slot>
                            </ToolRow>
                        </ToolColumn>
                    </GroupBody>
                    <GroupLabel $launcher>Font</GroupLabel>
                    <LauncherSpot><Launcher /></LauncherSpot>
                </Group>

                <Group $w={197}>
                    <GroupBody>
                        <ToolColumn $pl={7} $w={142}>
                            <ToolRow>
                                <Slot $w={26}><Lines ys={[2, 8, 14]} xs={[[0, 14], [2, 12], [0, 14]]} /></Slot>
                                <ActiveSlot $w={26}><Lines ys={[3, 7, 11]} xs={[[0, 15], [2, 13], [0, 15]]} /></ActiveSlot>
                                <Slot $w={26}><Lines ys={[6, 10, 14]} xs={[[0, 15], [2, 13], [0, 15]]} /></Slot>
                                <Slot $w={24}><OrientIcon /></Slot>
                                <Slot $w={12}><Chevron /></Slot>
                            </ToolRow>
                            <ToolRow>
                                <Slot $w={26}><Lines ys={[1, 5, 9, 13]} xs={[[0, 15], [0, 10], [0, 15], [0, 10]]} /></Slot>
                                <Slot $w={26}><Lines ys={[1, 5, 9, 13]} xs={[[0, 15], [2, 13], [0, 15], [2, 13]]} /></Slot>
                                <Slot $w={26}><Lines ys={[1, 5, 9, 13]} xs={[[0, 15], [5, 15], [0, 15], [5, 15]]} /></Slot>
                                <Slot $w={26}><IndentIcon out /></Slot>
                                <Slot $w={26}><IndentIcon /></Slot>
                            </ToolRow>
                        </ToolColumn>
                        <VerticalRule />
                        <ToolColumn $pl={10}>
                            <ToolRow><WrapIcon /></ToolRow>
                            <ToolRow><MergeIcon /><ChevGap $ml={5}><Chevron /></ChevGap></ToolRow>
                        </ToolColumn>
                    </GroupBody>
                    <GroupLabel $launcher>Alignment</GroupLabel>
                    <LauncherSpot><Launcher /></LauncherSpot>
                </Group>

                <Group $w={162}>
                    <GroupBody>
                        <ToolColumn $pl={8}>
                            <ToolRow><Combo $w={145}>General<Chevron /></Combo></ToolRow>
                            <ToolRow>
                                <Slot $w={24}><AccountingIcon /></Slot>
                                <Slot $w={12}><Chevron /></Slot>
                                <Slot $w={34}><Glyph $size={19} $width={18}>%</Glyph></Slot>
                                <Slot $w={18}><CommaIcon /></Slot>
                                <Slot $w={10}><SlotLine /></Slot>
                                <Slot $w={19}><DecimalIcon inc /></Slot>
                                <Slot $w={33}><DecimalIcon /></Slot>
                            </ToolRow>
                        </ToolColumn>
                    </GroupBody>
                    <GroupLabel $launcher>Number</GroupLabel>
                    <LauncherSpot><Launcher /></LauncherSpot>
                </Group>

                <Group $w={198}>
                    <GroupBody>
                        <BigButton $w={90}>
                            <BigIcon><CondFormatIcon /></BigIcon>
                            <BigLine>Conditional</BigLine>
                            <BigLine>Formatting<Chevron /></BigLine>
                        </BigButton>
                        <BigButton $w={46}>
                            <BigIcon><TableStyleIcon /></BigIcon>
                            <BigLine>Format as</BigLine>
                            <BigLine>Table<Chevron /></BigLine>
                        </BigButton>
                        <BigButton $w={61}>
                            <BigIcon><CellStyleIcon /></BigIcon>
                            <BigLine>Cell</BigLine>
                            <BigLine>Styles<Chevron /></BigLine>
                        </BigButton>
                    </GroupBody>
                    <GroupLabel>Styles</GroupLabel>
                </Group>

                <Group $w={98}>
                    <GroupBody>
                        <SmallStack $w={97} $pl={12}>
                            <SmallRow $gap={4}><InsertCellIcon />Insert<ChevGap $ml={6}><Chevron /></ChevGap></SmallRow>
                            <SmallRow $gap={4}><DeleteCellIcon />Delete<ChevGap $ml={6}><Chevron /></ChevGap></SmallRow>
                            <SmallRow $gap={4}><FormatCellIcon />Format<Chevron /></SmallRow>
                        </SmallStack>
                    </GroupBody>
                    <GroupLabel>Cells</GroupLabel>
                </Group>

                <Group $w={149}>
                    <GroupBody>
                        <SmallStack $w={44} $pl={12}>
                            <SmallRow $gap={8}><SigmaIcon /><Chevron /></SmallRow>
                            <SmallRow $gap={5}><FillDownIcon /><Chevron /></SmallRow>
                            <SmallRow $gap={5}><EraserIcon /><Chevron /></SmallRow>
                        </SmallStack>
                        <BigButton $w={54}>
                            <BigIcon><SortFilterIcon /></BigIcon>
                            <BigLine>Sort &amp;</BigLine>
                            <BigLine>Filter<Chevron /></BigLine>
                        </BigButton>
                        <BigButton $w={34}>
                            <BigIcon><FindIcon /></BigIcon>
                            <BigLine>Find &amp;</BigLine>
                            <BigLine>Select<Chevron /></BigLine>
                        </BigButton>
                    </GroupBody>
                    <GroupLabel>Editing</GroupLabel>
                </Group>

                <Group $w={62}>
                    <GroupBody>
                        <BigButton $w={61}>
                            <BigIcon><AnalyzeIcon /></BigIcon>
                            <BigLine>Analyze</BigLine>
                            <BigLine>Data</BigLine>
                        </BigButton>
                    </GroupBody>
                    <GroupLabel>Analysis</GroupLabel>
                </Group>

                <Group $w={75}>
                    <GroupBody>
                        <BigButton $w={74}>
                            <BigIcon><SensitivityIcon /></BigIcon>
                            <BigLine>Sensitivity</BigLine>
                            <BigLine><Chevron /></BigLine>
                        </BigButton>
                    </GroupBody>
                    <GroupLabel>Sensitivity</GroupLabel>
                </Group>

                <Group $w={63}>
                    <GroupBody>
                        <BigButton $w={62}>
                            <BigIcon><AddInsIcon /></BigIcon>
                            <BigLine>Add-ins</BigLine>
                        </BigButton>
                    </GroupBody>
                    <GroupLabel>Add-ins</GroupLabel>
                </Group>

                <Group $w={132}>
                    <GroupBody>
                        <BigButton $w={56}>
                            <BigIcon $ml={8}><PdfIcon /></BigIcon>
                            <BigLine $small>PDF を</BigLine>
                            <BigLine $small>作成</BigLine>
                        </BigButton>
                        <BigButton $w={62}>
                            <BigIcon $ml={8}><PdfIcon /></BigIcon>
                            <BigLine $small>PDF を作成し</BigLine>
                            <BigLine $small>てリンクを共有</BigLine>
                        </BigButton>
                    </GroupBody>
                    <GroupLabel>Adobe Acrobat</GroupLabel>
                </Group>

                <CollapseRibbon>
                    <I w={12} h={7}><path d='M.8 6 6 1l5.200 5' stroke='#444' /></I>
                </CollapseRibbon>
            </Ribbon>

            <FormulaBar>
                <NameBox>A1<Chev /></NameBox>
                <Dots>⋮</Dots>
                <FxBox>
                    <I w={13} h={13}><path d='M1 1l11 11M12 1 1 12' stroke='#c4c4c4' /></I>
                    <I w={15} h={13}><path d='M1 7l4 5L14 1' stroke='#c4c4c4' /></I>
                    <FxText>fx</FxText>
                </FxBox>
                <FormulaInput>
                    <FormulaCollapse>
                        <I w={12} h={7}><path d='M.8 6 6 1l5.200 5' stroke='#444' /></I>
                    </FormulaCollapse>
                </FormulaInput>
            </FormulaBar>

            <SheetArea>
                <SheetTable>
                    <colgroup>
                        <col width={27} />
                        {columns.map(([name, w]) => <col key={name} width={w} />)}
                        <col width={21} />
                    </colgroup>
                    <thead>
                        <tr>
                            <CornerHead />
                            {columns.map(([name]) => (
                                <ColHead key={name} $active={name === 'A'}>{name}</ColHead>
                            ))}
                            <ColHead />
                        </tr>
                    </thead>
                    <SheetRows />
                </SheetTable>
                <VScroll>
                    <Triangle $dir='up' />
                    <VThumb />
                    <Triangle $dir='down' />
                </VScroll>
            </SheetArea>

            <TabBar>
                <TabNav>
                    <NavArrow />
                    <NavArrow $right />
                </TabNav>
                {sheetTabs.map(([label, w], i) => (
                    <SheetTab key={label} $w={w} $active={i === 0}>{label}</SheetTab>
                ))}
                <AddSheet>+</AddSheet>
                <TabDots>⋮</TabDots>
                <HScroll>
                    <Triangle $dir='left' />
                    <HThumb />
                    <Triangle $dir='right' />
                </HScroll>
            </TabBar>

            <StatusBar>
                <StatusItem>Ready</StatusItem>
                <StatusItem $ml={20}><AccessibilityIcon />Accessibility: Good to go</StatusItem>
                <StatusItem $auto $w={99}><DisplayIcon />Display Settings</StatusItem>
                <ViewButton $active $ml={19}><NormalViewIcon /></ViewButton>
                <ViewButton><PageViewIcon /></ViewButton>
                <ViewButton><BreakViewIcon /></ViewButton>
                <ZoomSign $ml={10}>−</ZoomSign>
                <ZoomTrack />
                <ZoomSign $ml={7}>+</ZoomSign>
                <StatusItem $ml={11} $w={27}>100%</StatusItem>
            </StatusBar>
        </Window>
    );
}
